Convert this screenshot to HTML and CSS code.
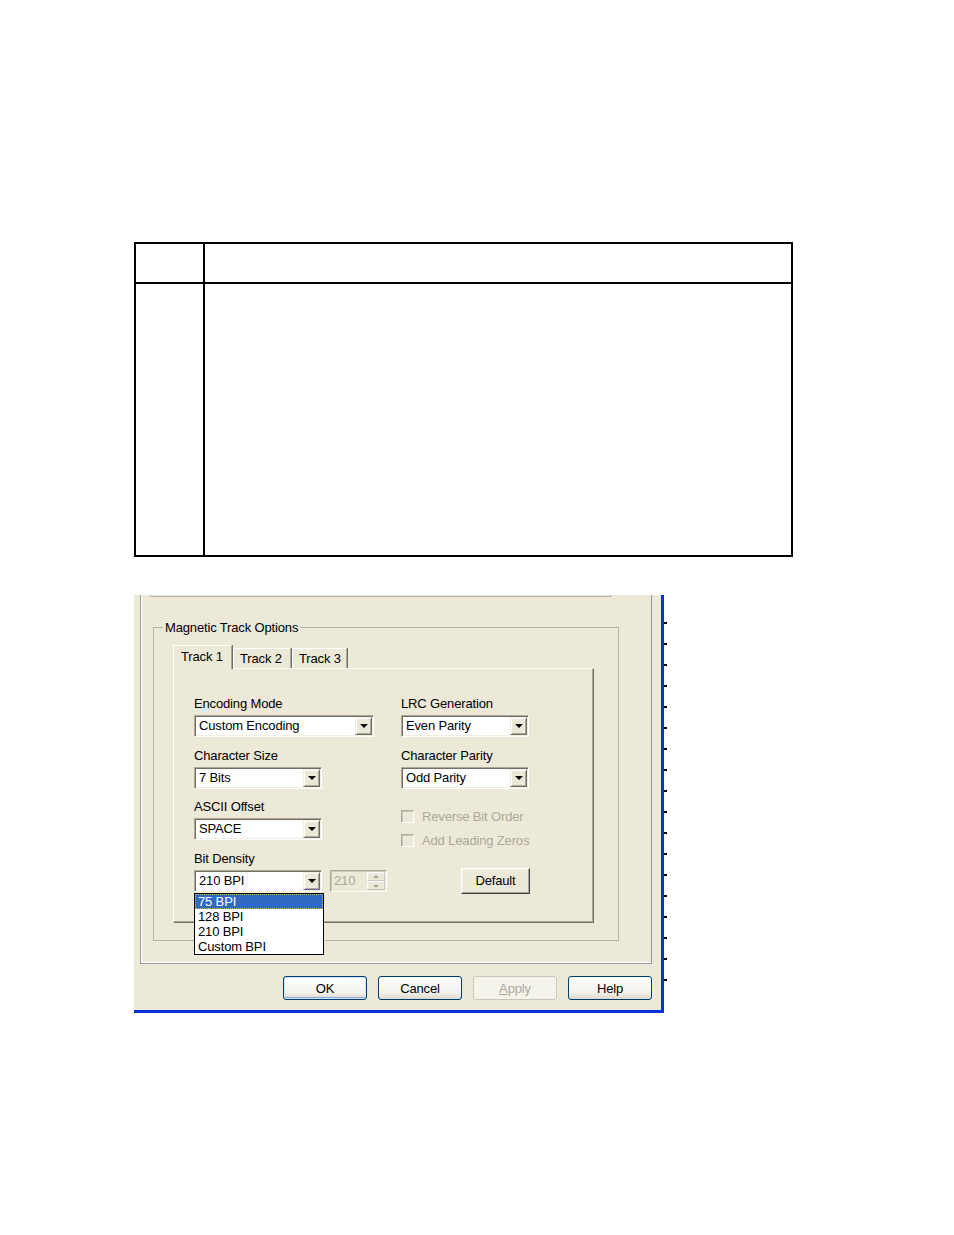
FILE: index.html
```html
<!DOCTYPE html>
<html lang="en">
<head>
    <meta charset="UTF-8">
    <meta name="viewport" content="width=954, initial-scale=1.0">
    <title>Magnetic Track Options</title>
    <link rel="stylesheet" href="styles.css">
</head>
<body>
    <div class="page">
        <table class="notes">
            <tr class="head-row"><td class="num"></td><td></td></tr>
            <tr class="body-row"><td class="num"></td><td></td></tr>
        </table>

        <div class="shot">
            <div class="dialog">
                <div class="sheet">
                    <div class="prev-group"></div>
                    <fieldset class="group">
                        <legend>Magnetic Track Options</legend>
                        <div class="tabs">
                            <div class="tab active">Track 1</div>
                            <div class="tab t2">Track 2</div>
                            <div class="tab t3">Track 3</div>
                        </div>
                        <div class="tab-page">
                            <div class="col left">
                                <div class="field">
                                    <div class="label">Encoding Mode</div>
                                    <div class="combo wide"><span class="value">Custom Encoding</span><span class="drop"></span></div>
                                </div>
                                <div class="field">
                                    <div class="label">Character Size</div>
                                    <div class="combo"><span class="value">7 Bits</span><span class="drop"></span></div>
                                </div>
                                <div class="field">
                                    <div class="label">ASCII Offset</div>
                                    <div class="combo"><span class="value">SPACE</span><span class="drop"></span></div>
                                </div>
                                <div class="field">
                                    <div class="label">Bit Density</div>
                                    <div class="row">
                                        <div class="combo open">
                                            <span class="value">210 BPI</span><span class="drop"></span>
                                            <!-- open drop-down list -->
                                            <div class="list">
                                                <div class="item selected">75 BPI</div>
                                                <div class="item">128 BPI</div>
                                                <div class="item">210 BPI</div>
                                                <div class="item">Custom BPI</div>
                                            </div>
                                        </div>
                                        <div class="spin">
                                            <span class="value">210</span>
                                            <span class="spin-btns">
                                                <span class="spin-btn"><span class="up"></span></span>
                                                <span class="spin-btn"><span class="down"></span></span>
                                            </span>
                                        </div>
                                    </div>
                                </div>
                            </div>
                            <div class="col right">
                                <div class="field">
                                    <div class="label">LRC Generation</div>
                                    <div class="combo"><span class="value">Even Parity</span><span class="drop"></span></div>
                                </div>
                                <div class="field">
                                    <div class="label">Character Parity</div>
                                    <div class="combo"><span class="value">Odd Parity</span><span class="drop"></span></div>
                                </div>
                                <div class="checks">
                                    <label class="check"><span class="box"></span>Reverse Bit Order</label>
                                    <label class="check"><span class="box"></span>Add Leading Zeros</label>
                                </div>
                                <button class="classic-btn">Default</button>
                            </div>
                        </div>
                    </fieldset>
                </div>
                <div class="buttons">
                    <button class="xp-btn default">OK</button>
                    <button class="xp-btn">Cancel</button>
                    <button class="xp-btn disabled"><u>A</u>pply</button>
                    <button class="xp-btn">Help</button>
                </div>
            </div>
            <div class="behind"></div>
        </div>
    </div>
</body>
</html>
```

FILE: styles.css
```css
* {
    box-sizing: border-box;
}
body {
    margin: 0;
    background: #fff;
    color: #000;
    font-family: "Liberation Sans", Arial, sans-serif;
    font-size: 13px;
}
.page {
    padding: 242px 0 0 134px;
}

/* empty table at the top */
.notes {
    border-collapse: separate;
    border-spacing: 0;
    border-top: 2px solid #000;
    border-left: 2px solid #000;
}
.notes td {
    padding: 0;
    border-right: 2px solid #000;
    border-bottom: 2px solid #000;
    width: 588px;
}
.notes .num {
    width: 69px;
}
.head-row td {
    height: 40px;
}
.body-row td {
    height: 273px;
}

/* dialog screenshot */
.shot {
    display: flex;
    margin-top: 38px;
}
.dialog {
    width: 530px;
    padding: 0 9px 0 6px;
    background: #ECE9D8;
    border-right: 3px solid #0831D9;
    border-bottom: 3px solid #0831D9;
    letter-spacing: -0.15px;
}
.behind {
    width: 3px;
    margin-top: 8px;
    margin-bottom: 20px;
    background: repeating-linear-gradient(to bottom, transparent 0 19px, #000 19px 21px);
}
.sheet {
    height: 369px;
    border-left: 1px solid #919B9C;
    border-right: 1px solid #919B9C;
    border-bottom: 1px solid #919B9C;
    box-shadow: inset 1px 0 0 #fff, inset 0 -1px 0 #fff;
}
.prev-group {
    margin-left: 9px;
    width: 461px;
    height: 2px;
    border: 1px solid #B5B2A4;
    border-top: none;
}
.group {
    margin: 23px 0 0 12px;
    width: 466px;
    height: 321px;
    padding: 0;
    border: 1px solid #B5B2A4;
}
.group legend {
    margin-left: 9px;
    padding: 0 2px;
    line-height: 15px;
}

/* tabs */
.tabs {
    display: flex;
    align-items: flex-end;
    height: 23px;
    margin: 10px 0 0 19px;
}
.tab {
    height: 20px;
    line-height: 19px;
    padding: 0 6px;
    border-top: 1px solid #fff;
    border-left: 1px solid #fff;
    border-right: 1px solid #ACA899;
    box-shadow: 1px 0 0 #716F64;
    white-space: nowrap;
}
.tab.active {
    position: relative;
    z-index: 1;
    width: 59px;
    height: 24px;
    margin-bottom: -1px;
    padding: 0 7px;
    line-height: 21px;
    background: #ECE9D8;
}
.tab.t2 {
    width: 58px;
    margin-left: 1px;
}
.tab.t3 {
    width: 55px;
    margin-left: 1px;
}
.tab-page {
    display: flex;
    width: 420px;
    height: 254px;
    margin-left: 19px;
    padding: 27px 0 0 20px;
    border-top: 1px solid #fff;
    border-left: 1px solid #fff;
    border-right: 1px solid #ACA899;
    border-bottom: 1px solid #ACA899;
    box-shadow: 1px 1px 0 #716F64;
}
.col.left {
    width: 207px;
}
.field {
    margin-bottom: 10.67px;
}
.label {
    line-height: 15px;
    margin-bottom: 4px;
    white-space: nowrap;
}
.row {
    display: flex;
    gap: 8px;
}

/* combo boxes */
.combo {
    position: relative;
    display: flex;
    width: 128px;
    height: 22px;
    background: #fff;
    border: 1px solid;
    border-color: #ACA899 #fff #fff #ACA899;
    box-shadow: inset 1px 1px 0 #716F64, inset -1px -1px 0 #F1EFE2;
}
.combo.wide {
    width: 180px;
}
.combo .value {
    flex: 1;
    padding-left: 4px;
    line-height: 20px;
    white-space: nowrap;
}
.drop {
    position: relative;
    width: 17px;
    height: 18px;
    margin: 1px 1px 0 0;
    background: #ECE9D8;
    border: 1px solid;
    border-color: #F1EFE2 #716F64 #716F64 #F1EFE2;
    box-shadow: inset 1px 1px 0 #fff, inset -1px -1px 0 #ACA899;
}
.drop::after {
    content: "";
    position: absolute;
    left: 4px;
    top: 6px;
    border-left: 4px solid transparent;
    border-right: 4px solid transparent;
    border-top: 4px solid #000;
}
.list {
    position: absolute;
    z-index: 2;
    left: -1px;
    top: 22px;
    width: 130px;
    background: #fff;
    border: 1px solid #000;
}
.item {
    height: 15px;
    line-height: 15px;
    padding-left: 3px;
}
.item.selected {
    background: #316AC5;
    color: #fff;
    outline: 1px dotted #D9B060;
    outline-offset: -1px;
}

/* disabled spinner */
.spin {
    display: flex;
    width: 57px;
    height: 22px;
    border: 1px solid;
    border-color: #ACA899 #fff #fff #ACA899;
    box-shadow: inset 1px 1px 0 #CAC8BB;
    color: #ACA899;
}
.spin .value {
    flex: 1;
    padding-left: 3px;
    line-height: 20px;
}
.spin-btns {
    display: flex;
    flex-direction: column;
    width: 18px;
    margin: 1px 1px 1px 0;
}
.spin-btn {
    position: relative;
    flex: 1;
    border: 1px solid;
    border-color: #fff #CAC8BB #CAC8BB #fff;
}
.up, .down {
    position: absolute;
    left: 5px;
    border-left: 3px solid transparent;
    border-right: 3px solid transparent;
}
.up {
    top: 2px;
    border-bottom: 3px solid #ACA899;
}
.down {
    top: 3px;
    border-top: 3px solid #ACA899;
}

/* check boxes */
.checks {
    margin-top: 21px;
}
.check {
    display: flex;
    align-items: center;
    gap: 8px;
    height: 14px;
    margin-bottom: 10px;
    color: #ACA899;
    white-space: nowrap;
}
.box {
    width: 13px;
    height: 13px;
    border: 1px solid;
    border-color: #ACA899 #fff #fff #ACA899;
    box-shadow: inset 1px 1px 0 #CAC8BB;
}

/* buttons */
button {
    font-family: inherit;
    font-size: 13px;
    letter-spacing: inherit;
    color: #000;
    padding: 0;
}
.classic-btn {
    display: block;
    width: 69px;
    height: 26px;
    margin: 20px 0 0 60px;
    background: #ECE9D8;
    border: 1px solid;
    border-color: #fff #404040 #404040 #fff;
    box-shadow: inset -1px -1px 0 #ACA899, inset 1px 1px 0 #F1EFE2;
}
.buttons {
    display: flex;
    justify-content: flex-end;
    gap: 11px;
    padding: 12px 0 10px;
}
.xp-btn {
    width: 84px;
    height: 24px;
    border: 1px solid #003C74;
    border-radius: 3px;
    background: linear-gradient(#fff, #F3F2EC 70%, #DCD8CB);
}
.xp-btn.default {
    box-shadow: inset 0 0 0 1px #CEE7FF, inset 0 -1px 0 1px #8BA8E6;
}
.xp-btn.disabled {
    border-color: #C9C7BA;
    background: #F5F4EA;
    color: #ACA899;
}
```
